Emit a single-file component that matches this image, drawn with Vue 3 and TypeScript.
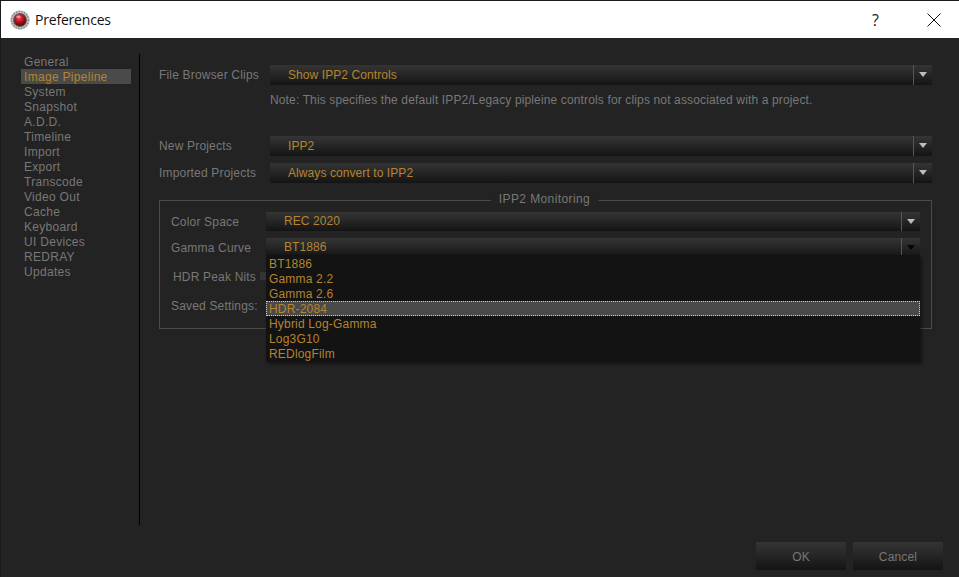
<script setup lang="ts">
const navItems = [
  'General', 'Image Pipeline', 'System', 'Snapshot', 'A.D.D.', 'Timeline', 'Import', 'Export',
  'Transcode', 'Video Out', 'Cache', 'Keyboard', 'UI Devices', 'REDRAY', 'Updates',
]
const activeNav = 'Image Pipeline'
const gammaOptions = ['BT1886', 'Gamma 2.2', 'Gamma 2.6', 'HDR-2084', 'Hybrid Log-Gamma', 'Log3G10', 'REDlogFilm']
const selectedGamma = 'HDR-2084'
</script>

<template>
  <div class="window">
    <header class="titlebar">
      <svg class="app-icon" width="20" height="20" viewBox="0 0 20 20">
        <defs>
          <radialGradient id="ball" cx="42%" cy="32%" r="70%">
            <stop offset="0" stop-color="#f0505a" />
            <stop offset="0.5" stop-color="#b3141f" />
            <stop offset="1" stop-color="#520609" />
          </radialGradient>
        </defs>
        <circle cx="10" cy="10" r="9.8" fill="#c9c9c9" />
        <circle cx="10" cy="10" r="8.4" fill="none" stroke="#8a8a8a" stroke-width="1.6" stroke-dasharray="1.5 1.2" />
        <circle cx="10" cy="10" r="7" fill="#5c5c5c" />
        <circle cx="10" cy="10" r="6" fill="url(#ball)" />
        <ellipse cx="8.4" cy="6.8" rx="2.2" ry="1.2" fill="#f5b0b4" opacity="0.75" />
      </svg>
      <span class="title">Preferences</span>
      <span class="help">?</span>
      <svg class="close" width="14" height="14" viewBox="0 0 14 14">
        <path d="M0.5 0.5 L13.5 13.5 M13.5 0.5 L0.5 13.5" stroke="#111" stroke-width="1" fill="none" />
      </svg>
    </header>

    <div class="body">
      <nav class="sidebar">
        <div v-for="item in navItems" :key="item" class="nav-item" :class="{ active: item === activeNav }">
          {{ item }}
        </div>
      </nav>

      <main class="content">
        <div class="row first-row">
          <label class="row-label">File Browser Clips</label>
          <div class="combo">
            <span class="combo-text">Show IPP2 Controls</span>
            <span class="combo-arrow"><i class="tri"></i></span>
          </div>
        </div>
        <p class="note">Note: This specifies the default IPP2/Legacy pipleine controls for clips not associated with a project.</p>

        <div class="row new-row">
          <label class="row-label">New Projects</label>
          <div class="combo">
            <span class="combo-text">IPP2</span>
            <span class="combo-arrow"><i class="tri"></i></span>
          </div>
        </div>
        <div class="row imported-row">
          <label class="row-label">Imported Projects</label>
          <div class="combo">
            <span class="combo-text">Always convert to IPP2</span>
            <span class="combo-arrow"><i class="tri"></i></span>
          </div>
        </div>

        <section class="group">
          <div class="legend">IPP2 Monitoring</div>
          <div class="group-row space-row">
            <label class="group-label">Color Space</label>
            <div class="combo inner">
              <span class="combo-text">REC 2020</span>
              <span class="combo-arrow"><i class="tri"></i></span>
            </div>
          </div>
          <div class="group-row gamma-row">
            <label class="group-label">Gamma Curve</label>
            <div class="combo inner open">
              <span class="combo-text">BT1886</span>
              <span class="combo-arrow"><i class="tri dark"></i></span>
              <ul class="dropdown">
                <li v-for="opt in gammaOptions" :key="opt" :class="{ selected: opt === selectedGamma }">{{ opt }}</li>
              </ul>
            </div>
          </div>
          <div class="group-row nits-row">
            <label class="group-label nits">HDR Peak Nits</label>
            <div class="nits-field"></div>
          </div>
          <div class="group-row saved-row">
            <label class="group-label">Saved Settings:</label>
          </div>
        </section>
      </main>
    </div>

    <footer class="footer">
      <button class="btn">OK</button>
      <button class="btn">Cancel</button>
    </footer>
  </div>
</template>

<style scoped>
.window {
  width: 959px;
  height: 577px;
  box-sizing: border-box;
  display: flex;
  flex-direction: column;
  background: #232323;
  border-top: 1px solid #1a1a1a;
  border-left: 1px solid #1a1a1a;
  font-family: "Liberation Sans", Arial, sans-serif;
  font-size: 12px;
  letter-spacing: 0.18px;
  color: #787878;
  overflow: hidden;
}

.titlebar {
  height: 37px;
  flex: none;
  display: flex;
  align-items: center;
  background: #fff;
  padding-left: 9px;
}

.app-icon {
  flex: none;
}

.title {
  margin-left: 5px;
  font-family: "Open Sans", sans-serif;
  font-size: 14px;
  letter-spacing: -0.2px;
  color: #111;
}

.help {
  margin-left: auto;
  font-family: "Open Sans", sans-serif;
  font-size: 16px;
  letter-spacing: 0;
  color: #222;
}

.close {
  margin-left: 48px;
  margin-right: 18px;
}

.body {
  flex: 1;
  display: flex;
  min-height: 0;
  padding-top: 16px;
}

.sidebar {
  width: 118px;
  height: 471px;
  box-sizing: content-box;
  padding-left: 20px;
  border-right: 1px solid #000;
}

.nav-item {
  width: 107px;
  height: 15px;
  line-height: 17px;
  padding-left: 3px;
  white-space: nowrap;
  letter-spacing: 0.3px;
}

.nav-item.active {
  background: #4a4a4a;
  color: #b5842f;
}

.content {
  flex: 1;
  padding-left: 19px;
  padding-right: 27px;
  min-width: 0;
}

.row {
  display: flex;
  align-items: center;
  height: 20px;
}

.first-row {
  margin-top: 11px;
}

.new-row {
  margin-top: 28px;
}

.imported-row {
  margin-top: 7px;
}

.row-label {
  width: 111px;
  flex: none;
  white-space: nowrap;
}

.combo {
  position: relative;
  flex: 1;
  height: 20px;
  display: flex;
  align-items: center;
  background: linear-gradient(#343434, #2a2a2a 35%, #141414);
  color: #b5842f;
}

.combo-text {
  flex: 1;
  padding-left: 18px;
  letter-spacing: 0.08px;
}

.combo.inner .combo-text {
  padding-bottom: 2px;
}

.combo-arrow {
  width: 19px;
  height: 100%;
  flex: none;
  box-sizing: border-box;
  border-left: 1px solid #565656;
  display: flex;
  align-items: center;
  justify-content: center;
}

.tri {
  width: 0;
  height: 0;
  border-left: 4px solid transparent;
  border-right: 4px solid transparent;
  border-top: 5px solid #bdbdbd;
  margin-top: -1px;
}

.tri.dark {
  border-top-color: #050505;
}

.note {
  margin: 7px 0 0 111px;
  height: 16px;
  line-height: 16px;
  white-space: nowrap;
  letter-spacing: 0.14px;
}

.group {
  position: relative;
  box-sizing: border-box;
  height: 129px;
  margin-top: 17px;
  border: 1px solid #4a4a4a;
  padding: 11px 11px 0 11px;
}

.legend {
  position: absolute;
  top: -9px;
  left: 50%;
  transform: translateX(-50%);
  margin-left: -1px;
  padding: 0 8px;
  background: #232323;
  white-space: nowrap;
  line-height: 15px;
  letter-spacing: 0.4px;
}

.group-row {
  display: flex;
  align-items: center;
  height: 19px;
}

.gamma-row {
  margin-top: 7px;
}

.nits-row {
  margin-top: 10px;
}

.saved-row {
  margin-top: 10px;
}

.group-label {
  width: 95px;
  flex: none;
  white-space: nowrap;
}

.group-label.nits {
  width: 87px;
  padding-left: 2px;
}

.combo.inner {
  height: 19px;
}

.nits-field {
  width: 6px;
  height: 8px;
  margin-top: -1px;
  background: #343434;
}

.dropdown {
  position: absolute;
  z-index: 2;
  top: 17px;
  left: 0;
  right: 0;
  margin: 0;
  padding: 1px 0 0;
  list-style: none;
  height: 107px;
  box-sizing: border-box;
  background: #131313;
  box-shadow: 2px 2px 3px rgba(0, 0, 0, 0.45);
}

.dropdown li {
  height: 15px;
  line-height: 16px;
  padding-left: 3px;
  box-sizing: border-box;
}

.dropdown li.selected {
  background: #4a4a4a;
  outline: 1px dotted #cfcfcf;
  outline-offset: -1px;
}

.footer {
  flex: none;
  height: 28px;
  display: flex;
  justify-content: flex-end;
  gap: 7px;
  padding: 0 16px 7px 0;
}

.btn {
  width: 90px;
  height: 28px;
  border: none;
  padding: 2px 0 0;
  background: linear-gradient(#343434, #2a2a2a 35%, #141414);
  color: #787878;
  font: inherit;
  letter-spacing: inherit;
}
</style>

<style>
html, body {
  background: #232323;
}
</style>
